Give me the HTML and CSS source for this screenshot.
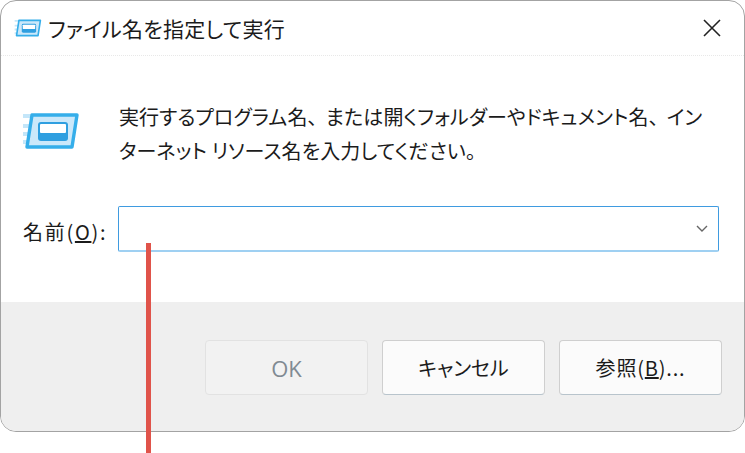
FILE: index.html
```html
<!DOCTYPE html>
<html lang="ja">
<head>
<meta charset="utf-8">
<title>ファイル名を指定して実行</title>
<link rel="stylesheet" href="styles.css">
</head>
<body>
<div class="window">
  <header class="titlebar">
    <svg class="icon-small" viewBox="0 0 58 44"><use href="#runicon"/></svg>
    <span class="title">ファイル名を指定して実行</span>
    <svg class="close" viewBox="0 0 18 18"><path d="M1 1 L17 17 M17 1 L1 17"/></svg>
  </header>
  <main class="content">
    <div class="message">
      <svg class="icon-large" viewBox="0 0 58 44">
        <defs>
          <g id="runicon">
            <path d="M1 6h9M1 16h7M1 24h6M1 32h5" stroke="#c4e6f9" stroke-width="4"/>
            <path d="M10 5 H55 L50 37 H5 Z" fill="#cbe8fa" stroke="#35aeea" stroke-width="3.4" stroke-linejoin="round"/>
            <rect x="16" y="12" width="30" height="19" rx="3" fill="#2f9fe0"/>
            <rect x="18" y="14" width="26" height="9" rx="1" fill="#fff"/>
          </g>
        </defs>
        <use href="#runicon"/>
      </svg>
      <p class="message-text">実行するプログラム名<span class="punct">、</span>または開くフォルダーやドキュメント名<span class="punct">、</span>イン<br>ターネット リソース名を入力してください。</p>
    </div>
    <div class="name-row">
      <label class="name-label">名前(<u>O</u>):</label>
      <div class="combo">
        <svg class="chevron" viewBox="0 0 12 8"><path d="M1 1 L6 6 L11 1"/></svg>
      </div>
    </div>
  </main>
  <footer class="footer">
    <button class="btn btn-disabled">OK</button>
    <button class="btn">キャンセル</button>
    <button class="btn btn-browse">参照(<u>B</u>)...</button>
  </footer>
</div>
<div class="pointer"></div>
</body>
</html>
```
FILE: styles.css
```css
html, body {
  margin: 0;
  padding: 0;
  width: 745px;
  height: 453px;
  overflow: hidden;
  background: #fff;
  font-family: "Noto Sans CJK JP", "Noto Sans", sans-serif;
  color: #1b1b1b;
}
.window {
  box-sizing: border-box;
  width: 745px;
  height: 432px;
  border: 1.5px solid #a3a3a3;
  border-radius: 16px;
  overflow: hidden;
  display: flex;
  flex-direction: column;
  background: #fff;
}
.titlebar {
  height: 55px;
  flex: none;
  display: flex;
  align-items: center;
  padding: 0 23px 0 13px;
  border-bottom: 1px dotted #e8e8e8;
  box-sizing: border-box;
}
.icon-small { width: 28px; height: 21px; flex: none; margin-right: 6px; }
.title { font-size: 21px; flex: 1; font-feature-settings: "palt"; letter-spacing: 0.3px; }
.close { width: 18px; height: 18px; fill: none; stroke: #222; stroke-width: 1.6; }
.content {
  flex: 1;
  padding: 0 25px 0 22px;
  background: #fff;
}
.message { display: flex; padding-top: 44px; }
.icon-large { width: 58px; height: 44px; flex: none; margin: 10px 39px 0 -1px; }
.message-text {
  margin: 0;
  width: 610px;
  font-size: 20px;
  line-height: 34px;
  font-feature-settings: "palt";
  letter-spacing: 0.1px;
  white-space: nowrap;
}
.punct { margin-right: 8px; }
.name-row { display: flex; align-items: center; margin-top: 38px; }
.name-label { width: 95px; font-size: 20px; letter-spacing: 1.7px; padding-top: 4px; font-feature-settings: "palt"; }
.combo {
  box-sizing: border-box;
  width: 602px;
  height: 46px;
  border: 1.5px solid #3f9be0;
  border-bottom: 2px solid #9fd0f2;
  border-radius: 2px;
  display: flex;
  align-items: center;
  justify-content: flex-end;
  padding-right: 10px;
  background: #fff;
}
.chevron { width: 12px; height: 8px; fill: none; stroke: #666; stroke-width: 1.4; }
.footer {
  height: 129px;
  flex: none;
  background: #efefef;
  display: flex;
  justify-content: flex-end;
  gap: 14px;
  padding: 38px 22px 0 0;
  box-sizing: border-box;
}
.btn {
  width: 163px;
  height: 55px;
  border: 1px solid #cfcfcf;
  border-bottom-color: #b8c4cc;
  border-radius: 4px;
  background: #fbfbfb;
  font-family: inherit;
  font-size: 20px;
  color: #1b1b1b;
  padding: 0;
  font-feature-settings: "palt";
}
.btn-browse { letter-spacing: 0.8px; }
.btn-disabled {
  background: #f2f2f2;
  border-color: #e2e2e2;
  color: #808a92;
  font-family: "Open Sans", "Noto Sans", sans-serif;
  font-size: 22px;
}
.pointer {
  position: absolute;
  left: 146px;
  top: 243px;
  width: 5px;
  height: 210px;
  background: #e0534a;
}
```
